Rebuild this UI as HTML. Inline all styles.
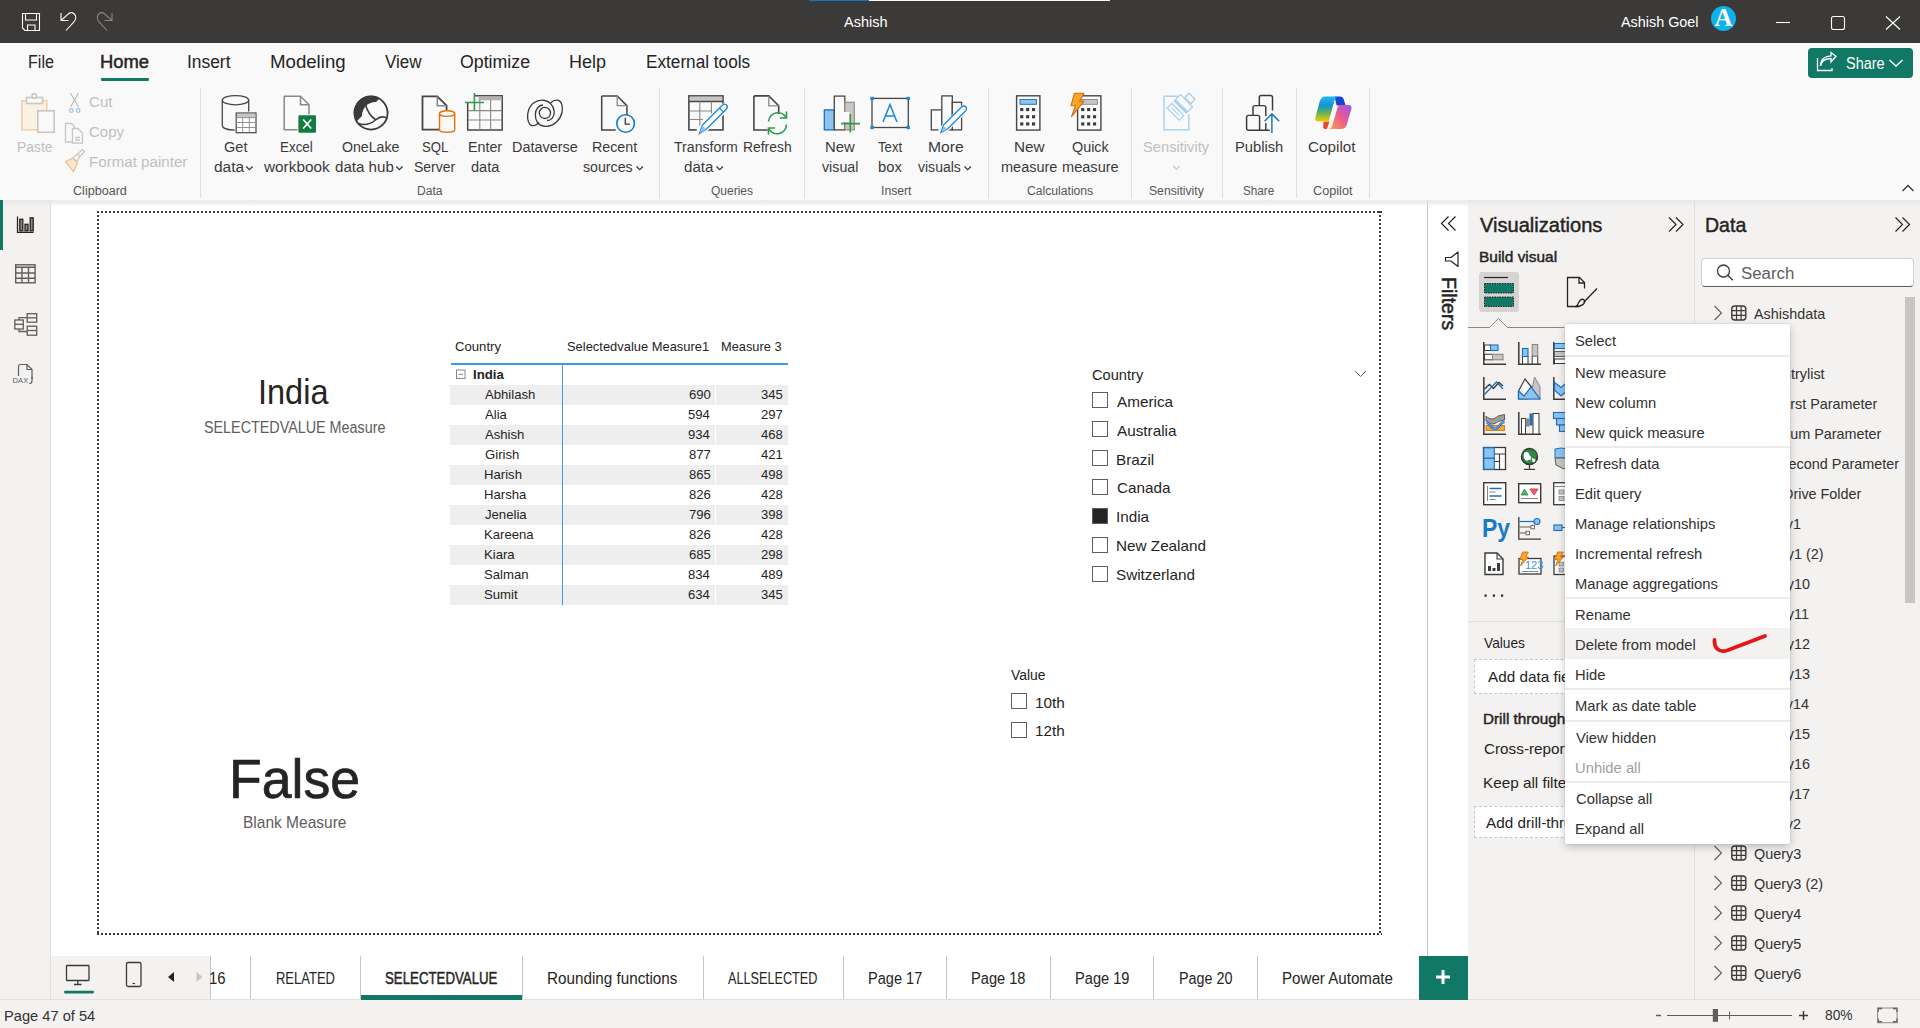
<!DOCTYPE html>
<html><head><meta charset="utf-8">
<style>
*{box-sizing:border-box}
html,body{margin:0;padding:0;width:1920px;height:1028px;overflow:hidden;background:#fff;font-family:"Liberation Sans",sans-serif;color:#252423}
.a{position:absolute}
.t{position:absolute;white-space:nowrap;line-height:1;transform-origin:0 0}
svg{position:absolute;overflow:visible}
</style></head><body>
<div class="a" style="left:0px;top:0px;width:1920px;height:43px;background:#3b3a39"></div>
<div class="a" style="left:809px;top:0px;width:60px;height:1px;background:#0078d4"></div>
<div class="a" style="left:869px;top:0px;width:241px;height:1px;background:#f8f8f8"></div>
<div class="a" style="left:0px;top:43px;width:1920px;height:157px;background:#f9f9f9"></div>
<div class="a" style="left:0px;top:200px;width:1920px;height:828px;background:#f3f2f1"></div>
<div class="a" style="left:51px;top:200px;width:1376px;height:756px;background:#fff"></div>
<div class="a" style="left:50px;top:200px;width:1px;height:800px;background:#e1dfdd"></div>
<div class="a" style="left:0px;top:200px;width:3px;height:50px;background:#117865"></div>
<div class="a" style="left:1427px;top:200px;width:1px;height:756px;background:#c8c6c4"></div>
<div class="a" style="left:1428px;top:200px;width:40px;height:756px;background:#fff"></div>
<div class="a" style="left:1694px;top:200px;width:1px;height:800px;background:#e1dfdd"></div>
<div class="a" style="left:0px;top:999px;width:1920px;height:1px;background:#e1dfdd"></div>
<div class="a" style="left:3px;top:200px;width:1917px;height:6px;background:linear-gradient(#e6e6e6,rgba(243,242,241,0))"></div>
<div class="a" style="left:51px;top:200px;width:1376px;height:6px;background:linear-gradient(#ececec,rgba(255,255,255,0))"></div>
<div class="a" style="left:1428px;top:200px;width:40px;height:6px;background:linear-gradient(#ececec,rgba(255,255,255,0))"></div>
<div class="t" style="left:844.40px;top:13.83px;font-size:15.5px;font-weight:400;color:#fff;transform:scaleX(0.9370);">Ashish</div>
<div class="t" style="left:1621.00px;top:13.53px;font-size:15.5px;font-weight:400;color:#fff;transform:scaleX(0.9277);">Ashish Goel</div>
<div class="t" style="left:27.86px;top:53.45px;font-size:18px;font-weight:400;color:#252423;transform:scaleX(0.8929);">File</div>
<div class="t" style="left:187.03px;top:53.45px;font-size:18px;font-weight:400;color:#252423;transform:scaleX(0.9659);">Insert</div>
<div class="t" style="left:269.96px;top:53.45px;font-size:18px;font-weight:400;color:#252423;transform:scaleX(1.0352);">Modeling</div>
<div class="t" style="left:384.60px;top:53.45px;font-size:18px;font-weight:400;color:#252423;transform:scaleX(0.9462);">View</div>
<div class="t" style="left:460.01px;top:53.45px;font-size:18px;font-weight:400;color:#252423;transform:scaleX(0.9857);">Optimize</div>
<div class="t" style="left:569.00px;top:53.45px;font-size:18px;font-weight:400;color:#252423;">Help</div>
<div class="t" style="left:645.55px;top:53.45px;font-size:18px;font-weight:400;color:#252423;transform:scaleX(0.9546);">External tools</div>
<div class="t" style="left:99.98px;top:53.45px;font-size:18px;font-weight:400;-webkit-text-stroke:0.45px #252423;color:#252423;transform:scaleX(1.0213);">Home</div>
<div class="a" style="left:101px;top:78px;width:48px;height:3px;background:#117865;border-radius:1px"></div>
<div class="a" style="left:1808px;top:48px;width:105px;height:30px;background:#117865;border-radius:4px"></div>
<div class="t" style="left:1846.10px;top:55.70px;font-size:16px;font-weight:400;color:#fff;transform:scaleX(0.9024);">Share</div>
<div class="t" style="left:17.11px;top:138.72px;font-size:15.5px;font-weight:400;color:#c1bfbd;transform:scaleX(0.8947);">Paste</div>
<div class="t" style="left:89.03px;top:94.42px;font-size:15.5px;font-weight:400;color:#c1bfbd;transform:scaleX(0.9739);">Cut</div>
<div class="t" style="left:89.03px;top:124.42px;font-size:15.5px;font-weight:400;color:#c1bfbd;transform:scaleX(0.9657);">Copy</div>
<div class="t" style="left:89.02px;top:154.32px;font-size:15.5px;font-weight:400;color:#c1bfbd;transform:scaleX(0.9760);">Format painter</div>
<div class="t" style="left:223.56px;top:138.72px;font-size:15.5px;font-weight:400;color:#3b3a39;transform:scaleX(0.9375);">Get</div>
<div class="t" style="left:214.00px;top:158.62px;font-size:15.5px;font-weight:400;color:#3b3a39;">data</div>
<div class="t" style="left:279.88px;top:138.72px;font-size:15.5px;font-weight:400;color:#3b3a39;transform:scaleX(0.8653);">Excel</div>
<div class="t" style="left:263.50px;top:158.62px;font-size:15.5px;font-weight:400;color:#3b3a39;transform:scaleX(0.9894);">workbook</div>
<div class="t" style="left:342.00px;top:138.72px;font-size:15.5px;font-weight:400;color:#3b3a39;transform:scaleX(0.9127);">OneLake</div>
<div class="t" style="left:334.50px;top:158.62px;font-size:15.5px;font-weight:400;color:#3b3a39;transform:scaleX(0.9750);">data hub</div>
<div class="t" style="left:421.65px;top:138.72px;font-size:15.5px;font-weight:400;color:#3b3a39;transform:scaleX(0.8500);">SQL</div>
<div class="t" style="left:414.10px;top:158.62px;font-size:15.5px;font-weight:400;color:#3b3a39;transform:scaleX(0.9000);">Server</div>
<div class="t" style="left:467.83px;top:138.72px;font-size:15.5px;font-weight:400;color:#3b3a39;transform:scaleX(0.9208);">Enter</div>
<div class="t" style="left:470.60px;top:158.62px;font-size:15.5px;font-weight:400;color:#3b3a39;transform:scaleX(0.9383);">data</div>
<div class="t" style="left:512.07px;top:138.72px;font-size:15.5px;font-weight:400;color:#3b3a39;transform:scaleX(0.9312);">Dataverse</div>
<div class="t" style="left:591.83px;top:138.72px;font-size:15.5px;font-weight:400;color:#3b3a39;transform:scaleX(0.9198);">Recent</div>
<div class="t" style="left:582.50px;top:158.62px;font-size:15.5px;font-weight:400;color:#3b3a39;transform:scaleX(0.9148);">sources</div>
<div class="t" style="left:673.75px;top:138.72px;font-size:15.5px;font-weight:400;color:#3b3a39;transform:scaleX(0.9107);">Transform</div>
<div class="t" style="left:683.75px;top:158.62px;font-size:15.5px;font-weight:400;color:#3b3a39;transform:scaleX(0.9750);">data</div>
<div class="t" style="left:742.85px;top:138.72px;font-size:15.5px;font-weight:400;color:#3b3a39;transform:scaleX(0.8962);">Refresh</div>
<div class="t" style="left:825.04px;top:138.72px;font-size:15.5px;font-weight:400;color:#3b3a39;transform:scaleX(0.9600);">New</div>
<div class="t" style="left:822.40px;top:158.62px;font-size:15.5px;font-weight:400;color:#3b3a39;transform:scaleX(0.9179);">visual</div>
<div class="t" style="left:878.30px;top:138.72px;font-size:15.5px;font-weight:400;color:#3b3a39;transform:scaleX(0.8483);">Text</div>
<div class="t" style="left:877.95px;top:158.62px;font-size:15.5px;font-weight:400;color:#3b3a39;transform:scaleX(0.9542);">box</div>
<div class="t" style="left:928.49px;top:138.72px;font-size:15.5px;font-weight:400;color:#3b3a39;transform:scaleX(1.0118);">More</div>
<div class="t" style="left:918.00px;top:158.62px;font-size:15.5px;font-weight:400;color:#3b3a39;transform:scaleX(0.9043);">visuals</div>
<div class="t" style="left:1013.81px;top:138.72px;font-size:15.5px;font-weight:400;color:#3b3a39;transform:scaleX(0.9867);">New</div>
<div class="t" style="left:1000.86px;top:158.62px;font-size:15.5px;font-weight:400;color:#3b3a39;transform:scaleX(0.9356);">measure</div>
<div class="t" style="left:1071.70px;top:138.72px;font-size:15.5px;font-weight:400;color:#3b3a39;transform:scaleX(0.9275);">Quick</div>
<div class="t" style="left:1061.56px;top:158.62px;font-size:15.5px;font-weight:400;color:#3b3a39;transform:scaleX(0.9407);">measure</div>
<div class="t" style="left:1235.45px;top:138.72px;font-size:15.5px;font-weight:400;color:#3b3a39;transform:scaleX(0.9490);">Publish</div>
<div class="t" style="left:1308.31px;top:138.72px;font-size:15.5px;font-weight:400;color:#3b3a39;transform:scaleX(0.9854);">Copilot</div>
<div class="t" style="left:1143.45px;top:138.72px;font-size:15.5px;font-weight:400;color:#c1bfbd;transform:scaleX(0.9478);">Sensitivity</div>
<div class="t" style="left:73.40px;top:185.14px;font-size:12.3px;font-weight:400;color:#575655;transform:scaleX(1.0231);">Clipboard</div>
<div class="t" style="left:417.02px;top:185.14px;font-size:12.3px;font-weight:400;color:#575655;transform:scaleX(0.9800);">Data</div>
<div class="t" style="left:711.25px;top:185.14px;font-size:12.3px;font-weight:400;color:#575655;transform:scaleX(0.9767);">Queries</div>
<div class="t" style="left:880.91px;top:185.14px;font-size:12.3px;font-weight:400;color:#575655;transform:scaleX(0.9900);">Insert</div>
<div class="t" style="left:1027.00px;top:185.14px;font-size:12.3px;font-weight:400;color:#575655;transform:scaleX(0.9881);">Calculations</div>
<div class="t" style="left:1148.91px;top:185.14px;font-size:12.3px;font-weight:400;color:#575655;transform:scaleX(0.9891);">Sensitivity</div>
<div class="t" style="left:1243.35px;top:185.14px;font-size:12.3px;font-weight:400;color:#575655;transform:scaleX(0.9531);">Share</div>
<div class="t" style="left:1313.40px;top:185.14px;font-size:12.3px;font-weight:400;color:#575655;transform:scaleX(1.0316);">Copilot</div>
<div class="a" style="left:200px;top:88px;width:1px;height:110px;background:#e1dfdd"></div>
<div class="a" style="left:659px;top:88px;width:1px;height:110px;background:#e1dfdd"></div>
<div class="a" style="left:804px;top:88px;width:1px;height:110px;background:#e1dfdd"></div>
<div class="a" style="left:988px;top:88px;width:1px;height:110px;background:#e1dfdd"></div>
<div class="a" style="left:1131px;top:88px;width:1px;height:110px;background:#e1dfdd"></div>
<div class="a" style="left:1222px;top:88px;width:1px;height:110px;background:#e1dfdd"></div>
<div class="a" style="left:1296px;top:88px;width:1px;height:110px;background:#e1dfdd"></div>
<div class="a" style="left:1369px;top:88px;width:1px;height:110px;background:#e1dfdd"></div>
<svg style="left:0;top:0" width="1920" height="1028" viewBox="0 0 1920 1028">
<g fill="none" stroke="#fff" stroke-width="1.1">
<path d="M22.5 13.5h17v17h-14.5l-2.5-2.5z"/>
<path d="M25.5 13.5v6.5h11v-6.5"/>
<path d="M27.5 30.5v-5.5h7.5v5.5"/>
<path d="M61 13v7.5h7.5"/>
<path d="M61.5 20L68.5 13.8C72 11 76.5 14 75.5 19C75.2 20.5 74.5 21.3 73.5 22.3L66 30.5"/>
</g>
<g fill="none" stroke="#8a8886" stroke-width="1.1">
<path d="M112 13v7.5h-7.5"/>
<path d="M111.5 20L104.5 13.8C101 11 96.5 14 97.5 19C97.8 20.5 98.5 21.3 99.5 22.3L107 30.5"/>
</g>
<circle cx="1723.5" cy="18.5" r="12.5" fill="#0db1ed"/>
<g fill="none" stroke="#fff" stroke-width="1.1">
<path d="M1776 22.5h14"/>
<rect x="1831.5" y="16.5" width="13" height="13" rx="2"/>
<path d="M1886 16.5l14 13M1900 16.5l-14 13"/>
</g>
</svg>
<div class="t" style="left:1713px;top:5px;font-family:'Liberation Serif';font-weight:700;font-size:25px;color:#fff;width:21px;text-align:center">A</div>
<svg style="left:0;top:0" width="1920" height="1028" viewBox="0 0 1920 1028"><g fill="none" stroke="#fff" stroke-width="1.3">
<path d="M1817.5 58v12.5h14.5v-2.5"/>
<path d="M1820.5 66C1821.5 60.5 1825.5 58.5 1831 58.5V62L1836 56.3L1831 52.5V55.8C1825 56 1820.5 59.5 1820.5 66z"/>
<path d="M1889.5 60l6.5 6l6.5-6"/>
</g></svg>
<svg style="left:0;top:0" width="1920" height="1028" viewBox="0 0 1920 1028">
<!-- paste (disabled) -->
<g fill="none" stroke-width="1.6">
<rect x="21.8" y="100.8" width="25" height="29" fill="#fbf1e3" stroke="#f2d2a8"/>
<rect x="26.5" y="97.5" width="16" height="6" fill="#f9f9f9" stroke="#c8c6c4"/>
<circle cx="34.3" cy="96" r="2.3" fill="#f9f9f9" stroke="#c8c6c4"/>
<rect x="37.8" y="110.8" width="16.4" height="21.5" fill="#f9f9f9" stroke="#c8c6c4"/>
</g>
<!-- cut -->
<g fill="none" stroke="#b8b6b4" stroke-width="1.1"><path d="M70.5 93l8 14M78.5 93l-8 14"/></g>
<g fill="none" stroke="#9cc3e5" stroke-width="1.2"><circle cx="71.3" cy="110.5" r="1.8"/><circle cx="78.2" cy="110.5" r="1.8"/></g>
<!-- copy -->
<g fill="#f9f9f9" stroke="#c8c6c4" stroke-width="1.3">
<path d="M65.5 123.5h6l3 3v15.5h-9z"/>
<path d="M72.5 128.5h5.5l4.5 4.5v10h-10z"/>
<path d="M75 137.5h5M75 140h5"/>
</g>
<!-- format painter -->
<g stroke-width="1.2">
<path d="M65.5 161.5l7.5-3.5l4.5 5l-4 8.5z" fill="#fbe7d2" stroke="#f0b887"/>
<path d="M72.5 158l5 -4l2.5 2.5l-3 4.5z" fill="#f9f9f9" stroke="#c8c6c4"/>
<path d="M77.5 154l5-4.5l2 2l-4.5 5z" fill="#f9f9f9" stroke="#c8c6c4"/>
</g>
<!-- get data -->
<g fill="none" stroke="#484644" stroke-width="1.3">
<ellipse cx="235.5" cy="100.2" rx="13.2" ry="4.6" fill="#fafafa"/>
<path d="M222.3 100.2v25.3c0 2.5 5 4.5 12.5 4.7"/>
<path d="M248.7 100.2v11.2"/>
</g>
<rect x="236.2" y="113" width="19.8" height="19.7" fill="#fff" stroke="#484644" stroke-width="1.2"/>
<rect x="237" y="113.8" width="18.2" height="3.6" fill="#c8c6c4"/>
<g stroke="#8a8886" stroke-width="0.9"><path d="M236.5 117.6h19M236.5 122.5h19M236.5 127.5h19M242.7 117.6v15M249.3 117.6v15"/></g>
<!-- excel -->
<path d="M284.2 96.2h16.3l8.5 8.5v25h-24.8z" fill="#fafafa" stroke="#8a8886" stroke-width="1.5" stroke-linejoin="round"/>
<path d="M300.5 96.2v8.5h8.5" fill="none" stroke="#8a8886" stroke-width="1.5"/>
<rect x="297.6" y="114.4" width="19.2" height="19.1" rx="1.5" fill="#fafafa"/>
<rect x="298.4" y="115.2" width="17.6" height="17.5" rx="1.2" fill="#107c41"/>
<path d="M303.2 119.5l8 9M311.2 119.5l-8 9" stroke="#fff" stroke-width="1.7"/>
<!-- onelake -->
<defs><clipPath id="olc"><path d="M345 133L345 85L393 85z"/></clipPath></defs>
<circle cx="371" cy="113" r="17.2" fill="#3b3a39" clip-path="url(#olc)"/><circle cx="375.6" cy="115.6" r="13.6" fill="#fafafa"/>
<circle cx="371" cy="113" r="16.6" fill="none" stroke="#3b3a39" stroke-width="1.8"/>
<path d="M365.3 103.5C367 111 370.5 116.5 376 120M358.3 123.5C364 125.5 370 124.5 375.5 120C379 117 383 115.5 387.3 118.5" fill="none" stroke="#3b3a39" stroke-width="1.5"/>
<!-- sql server -->
<path d="M422.5 96.4h14.8l9.3 9.3v24h-24.1z" fill="#fafafa" stroke="#484644" stroke-width="1.8"/>
<path d="M437.3 96.4v9.3h9.3" fill="none" stroke="#8a8886" stroke-width="1.6"/>
<path d="M439.5 113.5v16.2c0 1.5 3.5 2.5 7.6 2.5s7.6-1 7.6-2.5v-16.2" fill="#fafafa" stroke="#e8710a" stroke-width="1.4"/>
<ellipse cx="447.1" cy="113.6" rx="7.6" ry="2.8" fill="#fafafa" stroke="#e8710a" stroke-width="1.4"/>
<!-- enter data -->
<rect x="467.7" y="95.8" width="34.5" height="34.2" fill="#fafafa" stroke="#484644" stroke-width="1.5"/>
<rect x="478.5" y="96.5" width="23" height="3.8" fill="#b4b2b0"/>
<g stroke="#8a8886" stroke-width="1.1"><path d="M468 110.6h34M468 120h34M479.8 100v30M490.6 100v30"/></g>
<rect x="464" y="92" width="10" height="10" fill="#fafafa"/>
<path d="M474.4 93v18M465 102.5h19" stroke="#339a47" stroke-width="1.6"/>
<!-- dataverse -->
<g fill="none" stroke="#3b3a39" stroke-width="1.3">
<path d="M538.8 122.5C536 126 532 126.5 530 124.5C527.5 122 527 116 528.2 111.5C530 104 536 100 542.5 100.2C549 100.5 553.5 105 554.2 111.5C554.8 117 551 120.5 547 120.5"/>
<path d="M550.8 102.8C553 100.5 556 99.8 558.5 100.3C562 101.5 563 107 562 112.5C560.5 119.5 554 126 546.5 126.3C542 126.5 539 124.5 537.5 122.5C534.5 118.5 534.8 111 537.5 108C539.5 105.5 541.5 105 543 105"/>
<circle cx="544.9" cy="112.9" r="5.6"/>
</g>
<!-- recent sources -->
<path d="M601.7 95.9h15.5l9.7 9.7v10" fill="none" stroke="#484644" stroke-width="1.5"/>
<path d="M601.7 95.9v34.1h14" fill="none" stroke="#484644" stroke-width="1.5"/>
<path d="M617.2 95.9v9.7h9.7" fill="none" stroke="#8a8886" stroke-width="1.3"/>
<circle cx="625.6" cy="123.5" r="8.8" fill="#fafafa" stroke="#0f7bd0" stroke-width="1.6"/>
<path d="M625.3 117.8v6.3h4.6" fill="none" stroke="#3b3a39" stroke-width="1.3"/>
<!-- transform data -->
<rect x="688.9" y="95.9" width="34.1" height="34" fill="#fafafa" stroke="#484644" stroke-width="1.6"/>
<rect x="689.7" y="96.7" width="32.5" height="4.5" fill="#c8c6c4"/>
<path d="M689 101.5h34" stroke="#484644" stroke-width="1.3"/>
<g stroke="#8a8886" stroke-width="1.1"><path d="M689 111h23M689 119.5h14M699.8 101.5v28M711.4 101.5v12"/></g>
<path d="M701 131L724 108" stroke="#fafafa" stroke-width="9" stroke-linecap="round"/>
<path d="M699.5 133.5L702.5 125L722 105.5C723.5 104 725.5 104 726.5 105C727.5 106 727.5 108 726 109.5L706.5 129z" fill="#fafafa" stroke="#1a86d9" stroke-width="1.3"/>
<path d="M700 133L702.3 126.3C703.8 126.5 705.5 128 705.8 129.5z" fill="#8fc3ee"/>
<path d="M719.5 108l4 4" stroke="#1a86d9" stroke-width="1.1"/>
<!-- refresh -->
<path d="M753.9 95.9h14.9l9.9 9.9v8.2" fill="none" stroke="#484644" stroke-width="1.6"/>
<path d="M753.9 95.9v34.1h13.8" fill="none" stroke="#484644" stroke-width="1.6"/>
<path d="M768.8 95.9v9.9h9.9" fill="none" stroke="#8a8886" stroke-width="1.3"/>
<g fill="none" stroke="#2a9a47" stroke-width="1.6">
<path d="M768.6 121.5A9.3 9.3 0 0 1 786 117.5"/>
<path d="M786.4 124.5A9.3 9.3 0 0 1 769 129"/>
<path d="M786.5 111.5v6.5h-6.5M768.5 134.5v-6.5h6.5"/>
</g>
<!-- new visual -->
<rect x="824.3" y="109.9" width="10" height="20" fill="#8cc4f0" stroke="#1a6dc4" stroke-width="1.3"/>
<rect x="834.3" y="96.1" width="10.5" height="33.8" fill="#fafafa" stroke="#484644" stroke-width="1.3"/>
<rect x="844.8" y="102.3" width="9.5" height="27.6" fill="#c8c6c4" stroke="#8a8886" stroke-width="1.1"/>
<rect x="839.5" y="112" width="10" height="10" fill="#fafafa"/>
<path d="M850.3 114v18.5M841 123.6h19" stroke="#339a47" stroke-width="1.6"/>
<!-- text box -->
<rect x="872" y="98.4" width="36.3" height="29.1" fill="none" stroke="#484644" stroke-width="1.3"/>
<g fill="#1a86d9"><rect x="870.4" y="96.8" width="3.4" height="3.4"/><rect x="906.5" y="96.8" width="3.4" height="3.4"/><rect x="870.4" y="125.8" width="3.4" height="3.4"/><rect x="906.5" y="125.8" width="3.4" height="3.4"/></g>
<path d="M883 122L890 104.5L897 122M885.5 116h9" fill="none" stroke="#1a86d9" stroke-width="1.5"/>
<!-- more visuals -->
<g fill="#fafafa" stroke="#484644" stroke-width="1.3">
<rect x="931.3" y="109.9" width="10.5" height="20"/>
<rect x="941.8" y="95.9" width="10.5" height="34"/>
<rect x="952.3" y="102.3" width="9.3" height="27.6"/>
</g>
<path d="M942.5 130.5L964 109" stroke="#fafafa" stroke-width="8.5" stroke-linecap="round"/>
<path d="M941 132.5L943.5 125L961.5 107C962.8 105.7 964.8 105.7 965.8 106.7C966.8 107.7 966.8 109.7 965.5 111L947.5 129z" fill="#fafafa" stroke="#1a86d9" stroke-width="1.3"/>
<path d="M941.5 132L943.5 126.5C945 126.8 946.5 128 946.8 129.5z" fill="#8fc3ee"/>
<!-- new measure -->
<rect x="1016.6" y="95.8" width="23.3" height="34.3" fill="#fafafa" stroke="#484644" stroke-width="1.4"/>
<rect x="1020" y="99.5" width="16.5" height="4.8" fill="#8cc4f0" stroke="#1a6dc4" stroke-width="0.9"/>
<g fill="#3b3a39"><rect x="1020.2" y="108.0" width="3.1" height="3.1"/><rect x="1020.2" y="115.2" width="3.1" height="3.1"/><rect x="1020.2" y="122.4" width="3.1" height="3.1"/><rect x="1026.1000000000001" y="108.0" width="3.1" height="3.1"/><rect x="1026.1000000000001" y="115.2" width="3.1" height="3.1"/><rect x="1026.1000000000001" y="122.4" width="3.1" height="3.1"/><rect x="1032.0" y="108.0" width="3.1" height="3.1"/><rect x="1032.0" y="115.2" width="3.1" height="3.1"/><rect x="1032.0" y="122.4" width="3.1" height="3.1"/></g>
<!-- quick measure -->
<rect x="1077.6" y="95.8" width="23.3" height="34.3" fill="#fafafa" stroke="#484644" stroke-width="1.4"/>
<rect x="1081" y="99.5" width="16.5" height="4.8" fill="#c8c6c4" stroke="#8a8886" stroke-width="0.9"/>
<g fill="#3b3a39"><rect x="1081.2" y="108.0" width="3.1" height="3.1"/><rect x="1081.2" y="115.2" width="3.1" height="3.1"/><rect x="1081.2" y="122.4" width="3.1" height="3.1"/><rect x="1087.1000000000001" y="108.0" width="3.1" height="3.1"/><rect x="1087.1000000000001" y="115.2" width="3.1" height="3.1"/><rect x="1087.1000000000001" y="122.4" width="3.1" height="3.1"/><rect x="1093.0" y="108.0" width="3.1" height="3.1"/><rect x="1093.0" y="115.2" width="3.1" height="3.1"/><rect x="1093.0" y="122.4" width="3.1" height="3.1"/></g>
<path d="M1074.5 93.2h9.5l-4.5 8h4.5l-12.5 15.5l4-11h-4.5z" fill="#f7a823" stroke="#d9680f" stroke-width="1.1" stroke-linejoin="round"/>
<!-- sensitivity -->
<path d="M1178.2 96.2H1164v33.6h24.8v-15.5" fill="none" stroke="#a9d2f0" stroke-width="1.5"/>
<g transform="rotate(45 1182 106)">
<rect x="1173" y="111.5" width="17" height="6.5" fill="#f9f9f9" stroke="#a9d2f0" stroke-width="1.3"/>
<path d="M1176 114.7h11" stroke="#a9d2f0" stroke-width="1.1"/>
<rect x="1173" y="99" width="17" height="9" fill="#f9f9f9" stroke="#a9d2f0" stroke-width="1.3"/>
<rect x="1173" y="105.5" width="17" height="2.5" fill="#a9d2f0"/>
<rect x="1178" y="92" width="8.5" height="6" fill="#f9f9f9" stroke="#a9d2f0" stroke-width="1.3"/>
</g>
<!-- publish -->
<g fill="none" stroke="#3b3a39" stroke-width="1.45" stroke-linejoin="round">
<path d="M1265.8 130.2h-17.2c-1.2 0-2-0.8-2-2v-10.8c0-1.2 0.8-2 2-2h9c1.2 0 2 0.8 2 2v12.8"/>
<path d="M1253 115.4v-7.8c0-1.2 0.8-2 2-2h8.8c1.2 0 2 0.8 2 2v8.4M1265.8 123v7.2h4"/>
<path d="M1259.3 105.6v-8.2c0-1.2 0.8-2 2-2h9.2c1.2 0 2 0.8 2 2v13.2"/>
</g>
<path d="M1271.9 133v-19M1264.6 121.2l7.3-7.3l7.3 7.3" fill="none" stroke="#1a7ab8" stroke-width="1.5"/>
</svg>
<svg style="left:0;top:0" width="1920" height="1028" viewBox="0 0 1920 1028">
<defs>
<linearGradient id="cpA" x1="0" y1="0" x2="0" y2="1"><stop offset="0" stop-color="#22b7f7"/><stop offset="0.35" stop-color="#1592d8"/><stop offset="0.6" stop-color="#53ae66"/><stop offset="1" stop-color="#f1cc06"/></linearGradient>
<linearGradient id="cpB" x1="1" y1="0" x2="0" y2="1"><stop offset="0" stop-color="#9b55f0"/><stop offset="0.5" stop-color="#ef5a8c"/><stop offset="1" stop-color="#fba54a"/></linearGradient>
</defs>
<path d="M1334.5 96.5h5.5c2 0 3.3 1.2 3.8 3l1.8 6h-9z" fill="#1846d1"/>
<path d="M1323.5 121.5h6l-2.5 7.3c-1.5 0.5-3 0.3-3.8-1z" fill="#e8492f"/>
<path d="M1325 96.5h13.5c-2.2 0.5-3.5 2-4.2 4.5l-5.5 20.5h-10.8c-2 0-3.2-1.5-2.8-3.5l4.5-16.5c0.8-3 2.8-5 5.3-5z" fill="url(#cpA)"/>
<path d="M1340.5 105h8c2 0 3.4 1.6 3 3.6l-4.7 15.9c-0.9 3-3 4.6-5.5 4.6h-12.8c2.2-0.5 3.4-2 4.1-4.5l5.1-17.6c0.5-1.3 1.5-2 2.8-2z" fill="url(#cpB)"/>
</svg>
<svg style="left:0;top:0" width="1920" height="1028" viewBox="0 0 1920 1028"><path d="M246.2 166.5l3.2 3.2l3.2-3.2" fill="none" stroke="#3b3a39" stroke-width="1.3"/><path d="M396.2 166.5l3.2 3.2l3.2-3.2" fill="none" stroke="#3b3a39" stroke-width="1.3"/><path d="M636.5 166.5l3.2 3.2l3.2-3.2" fill="none" stroke="#3b3a39" stroke-width="1.3"/><path d="M716.5 166.5l3.2 3.2l3.2-3.2" fill="none" stroke="#3b3a39" stroke-width="1.3"/><path d="M964.5 166.5l3.2 3.2l3.2-3.2" fill="none" stroke="#3b3a39" stroke-width="1.3"/><path d="M1173.3 166l3.2 3.2l3.2-3.2" fill="none" stroke="#c8c6c4" stroke-width="1.2"/><path d="M1902.5 191l5.5-5.5l5.5 5.5" fill="none" stroke="#3b3a39" stroke-width="1.4"/></svg>
<svg style="left:0;top:0" width="1920" height="1028" viewBox="0 0 1920 1028">
<g fill="none" stroke="#252423" stroke-width="1.3">
<path d="M17.5 216.5v15.8h16"/>
<rect x="19.8" y="219.3" width="3" height="11.5" fill="#8a8886"/><rect x="25" y="224.3" width="3" height="6.5" fill="#8a8886"/><rect x="30.2" y="217.8" width="3" height="13" fill="#8a8886"/>
</g>
<g fill="none" stroke="#605e5c" stroke-width="1.4">
<rect x="15.7" y="264.8" width="19.4" height="18"/>
<path d="M15.7 267.3h19.4M15.7 273h19.4M15.7 278.3h19.4M22 267.3v15.5M28.5 267.3v15.5"/>
</g>
<g fill="none" stroke="#605e5c" stroke-width="1.3">
<rect x="14.8" y="320" width="8.5" height="9" /><path d="M14.8 324.3h8.5"/>
<rect x="27.2" y="313.7" width="9.5" height="8.5"/><path d="M27.2 317.8h9.5"/>
<rect x="27.2" y="326.2" width="9.5" height="9"/><path d="M27.2 330.5h9.5"/>
<path d="M19 320v-2.3h8.2M19 329v2.5h8.2"/>
</g>
<g fill="none" stroke="#605e5c" stroke-width="1.2">
<path d="M18.5 376v-9.5c0-1.2 0.8-2 2-2h6.5l5 5v9.5"/>
<path d="M27 364.5v5h5"/>
<path d="M32 376.5v4.5c0 1.5-1.3 2.5-2.7 2.5"/>
</g>
</svg>
<div class="t" style="left:12.6px;top:376.8px;font-size:7.6px;color:#605e5c;letter-spacing:0px">DAX</div>
<svg style="left:0;top:0" width="1920" height="1028" viewBox="0 0 1920 1028"><g stroke="#3b3a39" stroke-width="2" stroke-dasharray="2 2"><path d="M97 212H1382"/><path d="M97 934H1382"/><path d="M98 211V935"/><path d="M1380 211V935"/></g></svg>
<div class="t" style="left:257.66px;top:374.95px;font-size:34.3px;font-weight:400;color:#252423;transform:scaleX(0.9472);">India</div>
<div class="t" style="left:203.80px;top:420.20px;font-size:16px;font-weight:400;color:#605e5c;transform:scaleX(0.8960);">SELECTEDVALUE Measure</div>
<div class="t" style="left:228.87px;top:751.00px;font-size:56px;font-weight:400;color:#252423;transform:scaleX(0.9580);-webkit-text-stroke:0.7px #252423;">False</div>
<div class="t" style="left:243.39px;top:814.05px;font-size:17px;font-weight:400;color:#605e5c;transform:scaleX(0.9125);">Blank Measure</div>
<div class="a" style="left:450px;top:385px;width:338px;height:20px;background:#eeeeee"></div>
<div class="a" style="left:715px;top:385px;width:1px;height:20px;background:#fff"></div>
<div class="a" style="left:450px;top:425px;width:338px;height:20px;background:#eeeeee"></div>
<div class="a" style="left:715px;top:425px;width:1px;height:20px;background:#fff"></div>
<div class="a" style="left:450px;top:465px;width:338px;height:20px;background:#eeeeee"></div>
<div class="a" style="left:715px;top:465px;width:1px;height:20px;background:#fff"></div>
<div class="a" style="left:450px;top:505px;width:338px;height:20px;background:#eeeeee"></div>
<div class="a" style="left:715px;top:505px;width:1px;height:20px;background:#fff"></div>
<div class="a" style="left:450px;top:545px;width:338px;height:20px;background:#eeeeee"></div>
<div class="a" style="left:715px;top:545px;width:1px;height:20px;background:#fff"></div>
<div class="a" style="left:450px;top:585px;width:338px;height:20px;background:#eeeeee"></div>
<div class="a" style="left:715px;top:585px;width:1px;height:20px;background:#fff"></div>
<div class="a" style="left:451px;top:363px;width:337px;height:2px;background:#3b9ae1"></div>
<div class="a" style="left:562px;top:364px;width:1px;height:241px;background:#3b9ae1"></div>
<div class="t" style="left:455.20px;top:340.02px;font-size:13.5px;font-weight:400;color:#252423;transform:scaleX(0.9725);">Country</div>
<div class="t" style="left:567.44px;top:340.02px;font-size:13.5px;font-weight:400;color:#252423;transform:scaleX(0.9565);">Selectedvalue Measure1</div>
<div class="t" style="left:720.55px;top:340.02px;font-size:13.5px;font-weight:400;color:#252423;transform:scaleX(0.9492);">Measure 3</div>
<svg style="left:0;top:0" width="1920" height="1028" viewBox="0 0 1920 1028"><rect x="456.5" y="370" width="8.5" height="8.5" fill="none" stroke="#8a8886" stroke-width="1"/><path d="M458.5 374.3h4.5" stroke="#8a8886" stroke-width="1"/></svg>
<div class="t" style="left:473.42px;top:368.32px;font-size:13.5px;font-weight:700;color:#252423;transform:scaleX(0.9806);">India</div>
<div class="t" style="left:484.60px;top:387.82px;font-size:13.5px;font-weight:400;color:#252423;transform:scaleX(0.9725);">Abhilash</div>
<div class="t" style="left:689.30px;top:387.82px;font-size:13.5px;font-weight:400;color:#252423;transform:scaleX(0.9725);">690</div>
<div class="t" style="left:761.40px;top:387.82px;font-size:13.5px;font-weight:400;color:#252423;transform:scaleX(0.9725);">345</div>
<div class="t" style="left:484.60px;top:407.82px;font-size:13.5px;font-weight:400;color:#252423;transform:scaleX(0.9725);">Alia</div>
<div class="t" style="left:688.33px;top:407.82px;font-size:13.5px;font-weight:400;color:#252423;transform:scaleX(0.9725);">594</div>
<div class="t" style="left:761.40px;top:407.82px;font-size:13.5px;font-weight:400;color:#252423;transform:scaleX(0.9725);">297</div>
<div class="t" style="left:484.60px;top:427.82px;font-size:13.5px;font-weight:400;color:#252423;transform:scaleX(0.9725);">Ashish</div>
<div class="t" style="left:688.33px;top:427.82px;font-size:13.5px;font-weight:400;color:#252423;transform:scaleX(0.9725);">934</div>
<div class="t" style="left:761.40px;top:427.82px;font-size:13.5px;font-weight:400;color:#252423;transform:scaleX(0.9725);">468</div>
<div class="t" style="left:484.60px;top:447.82px;font-size:13.5px;font-weight:400;color:#252423;transform:scaleX(0.9725);">Girish</div>
<div class="t" style="left:689.30px;top:447.82px;font-size:13.5px;font-weight:400;color:#252423;transform:scaleX(0.9725);">877</div>
<div class="t" style="left:761.40px;top:447.82px;font-size:13.5px;font-weight:400;color:#252423;transform:scaleX(0.9725);">421</div>
<div class="t" style="left:483.63px;top:467.82px;font-size:13.5px;font-weight:400;color:#252423;transform:scaleX(0.9725);">Harish</div>
<div class="t" style="left:689.30px;top:467.82px;font-size:13.5px;font-weight:400;color:#252423;transform:scaleX(0.9725);">865</div>
<div class="t" style="left:761.40px;top:467.82px;font-size:13.5px;font-weight:400;color:#252423;transform:scaleX(0.9725);">498</div>
<div class="t" style="left:483.63px;top:487.82px;font-size:13.5px;font-weight:400;color:#252423;transform:scaleX(0.9725);">Harsha</div>
<div class="t" style="left:689.30px;top:487.82px;font-size:13.5px;font-weight:400;color:#252423;transform:scaleX(0.9725);">826</div>
<div class="t" style="left:761.40px;top:487.82px;font-size:13.5px;font-weight:400;color:#252423;transform:scaleX(0.9725);">428</div>
<div class="t" style="left:484.60px;top:507.82px;font-size:13.5px;font-weight:400;color:#252423;transform:scaleX(0.9725);">Jenelia</div>
<div class="t" style="left:689.30px;top:507.82px;font-size:13.5px;font-weight:400;color:#252423;transform:scaleX(0.9725);">796</div>
<div class="t" style="left:761.40px;top:507.82px;font-size:13.5px;font-weight:400;color:#252423;transform:scaleX(0.9725);">398</div>
<div class="t" style="left:483.63px;top:527.82px;font-size:13.5px;font-weight:400;color:#252423;transform:scaleX(0.9725);">Kareena</div>
<div class="t" style="left:689.30px;top:527.82px;font-size:13.5px;font-weight:400;color:#252423;transform:scaleX(0.9725);">826</div>
<div class="t" style="left:761.40px;top:527.82px;font-size:13.5px;font-weight:400;color:#252423;transform:scaleX(0.9725);">428</div>
<div class="t" style="left:483.63px;top:547.82px;font-size:13.5px;font-weight:400;color:#252423;transform:scaleX(0.9725);">Kiara</div>
<div class="t" style="left:689.30px;top:547.82px;font-size:13.5px;font-weight:400;color:#252423;transform:scaleX(0.9725);">685</div>
<div class="t" style="left:761.40px;top:547.82px;font-size:13.5px;font-weight:400;color:#252423;transform:scaleX(0.9725);">298</div>
<div class="t" style="left:483.63px;top:567.82px;font-size:13.5px;font-weight:400;color:#252423;transform:scaleX(0.9725);">Salman</div>
<div class="t" style="left:688.33px;top:567.82px;font-size:13.5px;font-weight:400;color:#252423;transform:scaleX(0.9725);">834</div>
<div class="t" style="left:761.40px;top:567.82px;font-size:13.5px;font-weight:400;color:#252423;transform:scaleX(0.9725);">489</div>
<div class="t" style="left:483.63px;top:587.82px;font-size:13.5px;font-weight:400;color:#252423;transform:scaleX(0.9725);">Sumit</div>
<div class="t" style="left:688.33px;top:587.82px;font-size:13.5px;font-weight:400;color:#252423;transform:scaleX(0.9725);">634</div>
<div class="t" style="left:761.40px;top:587.82px;font-size:13.5px;font-weight:400;color:#252423;transform:scaleX(0.9725);">345</div>
<div class="t" style="left:1091.56px;top:366.82px;font-size:15.5px;font-weight:400;color:#252423;transform:scaleX(0.9434);">Country</div>
<svg style="left:0;top:0" width="1920" height="1028" viewBox="0 0 1920 1028"><path d="M1355 371l5.5 5.5l5.5-5.5" fill="none" stroke="#605e5c" stroke-width="1"/></svg>
<div class="a" style="left:1092px;top:392px;width:16px;height:16px;border:1px solid #605e5c;background:#fff"></div>
<div class="t" style="left:1116.80px;top:393.75px;font-size:15px;font-weight:400;color:#252423;transform:scaleX(1.0182);">America</div>
<div class="a" style="left:1092px;top:421px;width:16px;height:16px;border:1px solid #605e5c;background:#fff"></div>
<div class="t" style="left:1116.80px;top:422.65px;font-size:15px;font-weight:400;color:#252423;transform:scaleX(1.0182);">Australia</div>
<div class="a" style="left:1092px;top:450px;width:16px;height:16px;border:1px solid #605e5c;background:#fff"></div>
<div class="t" style="left:1115.78px;top:451.55px;font-size:15px;font-weight:400;color:#252423;transform:scaleX(1.0182);">Brazil</div>
<div class="a" style="left:1092px;top:479px;width:16px;height:16px;border:1px solid #605e5c;background:#fff"></div>
<div class="t" style="left:1116.80px;top:480.45px;font-size:15px;font-weight:400;color:#252423;transform:scaleX(1.0182);">Canada</div>
<div class="a" style="left:1092px;top:508px;width:16px;height:16px;border:1px solid #605e5c;background:#252423"></div>
<div class="t" style="left:1115.78px;top:509.35px;font-size:15px;font-weight:400;color:#252423;transform:scaleX(1.0182);">India</div>
<div class="a" style="left:1092px;top:537px;width:16px;height:16px;border:1px solid #605e5c;background:#fff"></div>
<div class="t" style="left:1115.78px;top:538.25px;font-size:15px;font-weight:400;color:#252423;transform:scaleX(1.0182);">New Zealand</div>
<div class="a" style="left:1092px;top:566px;width:16px;height:16px;border:1px solid #605e5c;background:#fff"></div>
<div class="t" style="left:1115.78px;top:567.15px;font-size:15px;font-weight:400;color:#252423;transform:scaleX(1.0182);">Switzerland</div>
<div class="t" style="left:1011.00px;top:667.12px;font-size:15.5px;font-weight:400;color:#252423;transform:scaleX(0.8947);">Value</div>
<div class="a" style="left:1011px;top:693px;width:16px;height:16px;border:1px solid #605e5c;background:#fff"></div>
<div class="t" style="left:1034.98px;top:694.75px;font-size:15px;font-weight:400;color:#252423;transform:scaleX(1.0182);">10th</div>
<div class="a" style="left:1011px;top:722px;width:16px;height:16px;border:1px solid #605e5c;background:#fff"></div>
<div class="t" style="left:1034.98px;top:723.25px;font-size:15px;font-weight:400;color:#252423;transform:scaleX(1.0182);">12th</div>
<div class="a" style="left:51px;top:956px;width:159px;height:43px;background:#f3f2f1"></div>
<div class="a" style="left:210px;top:956px;width:1209px;height:43px;background:#fff"></div>
<div class="a" style="left:210px;top:956px;width:1px;height:43px;background:#c8c6c4"></div>
<div class="a" style="left:250px;top:956px;width:1px;height:43px;background:#c8c6c4"></div>
<div class="a" style="left:360px;top:956px;width:1px;height:43px;background:#c8c6c4"></div>
<div class="a" style="left:522px;top:956px;width:1px;height:43px;background:#c8c6c4"></div>
<div class="a" style="left:703px;top:956px;width:1px;height:43px;background:#c8c6c4"></div>
<div class="a" style="left:843px;top:956px;width:1px;height:43px;background:#c8c6c4"></div>
<div class="a" style="left:946px;top:956px;width:1px;height:43px;background:#c8c6c4"></div>
<div class="a" style="left:1050px;top:956px;width:1px;height:43px;background:#c8c6c4"></div>
<div class="a" style="left:1153px;top:956px;width:1px;height:43px;background:#c8c6c4"></div>
<div class="a" style="left:1257px;top:956px;width:1px;height:43px;background:#c8c6c4"></div>
<div class="a" style="left:361px;top:995px;width:161px;height:5px;background:#117865"></div>
<div class="a" style="left:1419px;top:956px;width:49px;height:44px;background:#117865"></div>
<svg style="left:0;top:0" width="1920" height="1028" viewBox="0 0 1920 1028"><path d="M1443 970v14M1436 977h14" stroke="#fff" stroke-width="3"/></svg>
<div class="t" style="left:208.87px;top:971.40px;font-size:16px;font-weight:400;color:#252423;transform:scaleX(0.9294);">16</div>
<div class="t" style="left:276.09px;top:971.40px;font-size:16px;font-weight:400;color:#252423;transform:scaleX(0.8113);">RELATED</div>
<div class="t" style="left:547.35px;top:971.40px;font-size:16px;font-weight:400;color:#252423;transform:scaleX(0.9522);">Rounding functions</div>
<div class="t" style="left:728.40px;top:971.40px;font-size:16px;font-weight:400;color:#252423;transform:scaleX(0.7912);">ALLSELECTED</div>
<div class="t" style="left:867.69px;top:971.40px;font-size:16px;font-weight:400;color:#252423;transform:scaleX(0.9103);">Page 17</div>
<div class="t" style="left:971.09px;top:971.40px;font-size:16px;font-weight:400;color:#252423;transform:scaleX(0.9138);">Page 18</div>
<div class="t" style="left:1075.09px;top:971.40px;font-size:16px;font-weight:400;color:#252423;transform:scaleX(0.9138);">Page 19</div>
<div class="t" style="left:1179.10px;top:971.40px;font-size:16px;font-weight:400;color:#252423;transform:scaleX(0.8966);">Page 20</div>
<div class="t" style="left:1282.06px;top:971.40px;font-size:16px;font-weight:400;color:#252423;transform:scaleX(0.9448);">Power Automate</div>
<div class="t" style="left:385.37px;top:971.40px;font-size:16px;font-weight:400;-webkit-text-stroke:0.45px #252423;color:#252423;transform:scaleX(0.8284);">SELECTEDVALUE</div>
<svg style="left:0;top:0" width="1920" height="1028" viewBox="0 0 1920 1028">
<g fill="none" stroke="#3b3a39" stroke-width="1.3">
<rect x="66.5" y="965.5" width="22.5" height="15" rx="0.5"/>
<path d="M77.8 981v3.5M74 984.5h7.5"/>
<rect x="126.5" y="962.5" width="14.5" height="24" rx="1.5"/>
</g>
<path d="M132.5 983.5h2.5" stroke="#3b3a39" stroke-width="1.2"/>
<rect x="64" y="990.8" width="30" height="2.6" rx="1.3" fill="#117865"/>
<path d="M174 972v10l-6-5z" fill="#252423"/>
<path d="M196.5 972v10l6-5z" fill="#c8c6c4"/>
</svg>
<div class="t" style="left:4.09px;top:1008.88px;font-size:14.5px;font-weight:400;color:#323130;transform:scaleX(1.0101);">Page 47 of 54</div>
<svg style="left:0;top:0" width="1920" height="1028" viewBox="0 0 1920 1028">
<path d="M1656 1015.5h5" stroke="#605e5c" stroke-width="1.5"/>
<path d="M1667 1015.5h125" stroke="#605e5c" stroke-width="1"/>
<path d="M1729.6 1011.5v8" stroke="#605e5c" stroke-width="1"/>
<rect x="1712.8" y="1009" width="5.2" height="12.8" fill="#605e5c"/>
<path d="M1799 1015.5h9M1803.5 1011v9" stroke="#3b3a39" stroke-width="1.5"/>
<g fill="none" stroke="#3b3a39" stroke-width="1.3"><path d="M1878 1012v-3.5h4M1893 1008.5h4v3.5M1897 1018.5v3.5h-4M1882 1022h-4v-3.5"/></g>
<rect x="1877.6" y="1008" width="19.5" height="14.7" fill="none" stroke="#8a8886" stroke-width="1"/>
</svg>
<div class="t" style="left:1825.40px;top:1007.05px;font-size:15px;font-weight:400;color:#323130;transform:scaleX(0.9200);">80%</div>
<svg style="left:0;top:0" width="1920" height="1028" viewBox="0 0 1920 1028">
<g fill="none" stroke="#252423" stroke-width="1.2">
<path d="M1448.5 216.5l-7 7l7 7M1455.5 216.5l-7 7l7 7"/>
<path d="M1458 252v14.5l-7-5.5h-5.5v-3.5h5.5z" stroke-linejoin="round"/>
</g>
</svg>
<div class="t" style="left:1459.20px;top:277.12px;font-size:20px;font-weight:400;-webkit-text-stroke:0.5px #252423;color:#252423;transform:rotate(90deg) scaleX(0.9774)">Filters</div>
<div class="t" style="left:1479.60px;top:214.57px;font-size:20.5px;font-weight:400;-webkit-text-stroke:0.45px #252423;color:#252423;transform:scaleX(0.9792);">Visualizations</div>
<svg style="left:0;top:0" width="1920" height="1028" viewBox="0 0 1920 1028"><path d="M1669 217.5l7 7l-7 7M1676 217.5l7 7l-7 7" fill="none" stroke="#252423" stroke-width="1.2"/></svg>
<div class="t" style="left:1478.56px;top:250.02px;font-size:14.8px;font-weight:400;-webkit-text-stroke:0.45px #252423;color:#252423;transform:scaleX(1.0438);">Build visual</div>
<div class="a" style="left:1479px;top:272px;width:40px;height:40px;background:#d6d4d2;border-radius:3px"></div>
<svg style="left:0;top:0" width="1920" height="1028" viewBox="0 0 1920 1028">
<path d="M1484 277.5h24" stroke="#252423" stroke-width="1.2"/>
<rect x="1484.5" y="283.5" width="29" height="9.5" fill="#117865" stroke="#252423" stroke-width="1" stroke-dasharray="1.5 1"/>
<rect x="1484.5" y="297" width="29" height="9.5" fill="#117865" stroke="#252423" stroke-width="1" stroke-dasharray="1.5 1"/>
<g fill="none" stroke="#252423" stroke-width="1.3">
<path d="M1579.5 306.5h-12v-29h12l5 5v6"/>
<path d="M1579 277.5v5.5h5.5"/>
<path d="M1597 288.5L1583.5 302.5"/>
<path d="M1576 306.5c2.5 0 5.5-0.5 7.5-2.5c1.5-1.5 1.5-3 0.5-4c-1-1-2.5-1-4 0.5c-1.5 1.5-1.5 4-4 6z"/>
</g>
<path d="M1468 327.5h21.5l9-9l9 9h57" fill="none" stroke="#8a8886" stroke-width="1"/>
</svg>
<svg style="left:0;top:0" width="1920" height="1028" viewBox="0 0 1920 1028"><g transform="translate(1483,342)"><path d="M0.8 0v22.2h22.2" fill="none" stroke="#3b3a39" stroke-width="1.5"/><rect x="1.5" y="3" width="6" height="5.5" fill="#fff" stroke="#3b3a39" stroke-width="1"/><rect x="7.5" y="3" width="7.5" height="5.5" fill="#8cc4f0" stroke="#1a6dc4" stroke-width="1.1"/><rect x="1.5" y="12.3" width="8" height="5.5" fill="#fff" stroke="#3b3a39" stroke-width="1"/><rect x="9.5" y="12.3" width="10.5" height="5.5" fill="#c8c6c4" stroke="#8a8886" stroke-width="1.1"/></g><g transform="translate(1518,342)"><path d="M0.8 0v22.2h22.2" fill="none" stroke="#3b3a39" stroke-width="1.5"/><rect x="4.5" y="14.5" width="5.5" height="7.5" fill="#fff" stroke="#3b3a39" stroke-width="1"/><rect x="4.5" y="6.5" width="5.5" height="8" fill="#8cc4f0" stroke="#1a6dc4" stroke-width="1.1"/><rect x="14.2" y="14" width="5.5" height="8" fill="#fff" stroke="#3b3a39" stroke-width="1"/><rect x="14.2" y="2.5" width="5.5" height="11.5" fill="#c8c6c4" stroke="#8a8886" stroke-width="1.1"/></g><g transform="translate(1553,342)"><path d="M0.8 0v22.5" stroke="#3b3a39" stroke-width="1.5"/><rect x="1.5" y="1.5" width="21" height="5" fill="#8cc4f0" stroke="#1a6dc4" stroke-width="1"/><rect x="1.5" y="9.5" width="21" height="5" fill="#c8c6c4" stroke="#605e5c" stroke-width="1"/><rect x="1.5" y="17" width="21" height="4.5" fill="#fff" stroke="#3b3a39" stroke-width="1"/></g><g transform="translate(1483,377)"><path d="M0.8 0v22.2h22.2" fill="none" stroke="#3b3a39" stroke-width="1.5"/><path d="M1.5 12L6.5 7.5L10.5 11.5L16 5.5L20 9" fill="none" stroke="#3b3a39" stroke-width="1.3"/><path d="M1.5 17.5L13.5 5L20 12" fill="none" stroke="#1a6dc4" stroke-width="1.3"/></g><g transform="translate(1518,377)"><path d="M16.5 0L22 9.5V22H12z" fill="#c8c6c4" stroke="#8a8886" stroke-width="1"/><path d="M0.5 14L7 2L13.5 10L11 22H0.5z" fill="#fafafa" stroke="#3b3a39" stroke-width="1.2"/><path d="M0.5 14L6 19L13 10L22 22H0.5z" fill="#8cc4f0" stroke="#1a6dc4" stroke-width="1.2"/></g><g transform="translate(1553,377)"><path d="M0.8 0v22.2h22.2" fill="none" stroke="#3b3a39" stroke-width="1.5"/><path d="M1.5 5.5L8 10.5L14 5.5V14L8 19L1.5 13z" fill="#8cc4f0" stroke="#1a6dc4" stroke-width="1.2"/></g><g transform="translate(1483,412)"><path d="M0.8 0v22.2h22.2" fill="none" stroke="#3b3a39" stroke-width="1.5"/><path d="M3 4C7 8 11 8 15 4L21.5 2.5V8L15 9.5C11 13 7 13 3 9z" fill="#a19f9d" stroke="#605e5c" stroke-width="1"/><rect x="3" y="13.5" width="18.5" height="5" fill="#f7a823" stroke="#d9680f" stroke-width="0.8"/><path d="M3 10C6 10 8 17 12 17C16 17 17 10 21.5 10" fill="none" stroke="#1a6dc4" stroke-width="2.6"/><path d="M3 10C6 10 8 17 12 17C16 17 17 10 21.5 10" fill="none" stroke="#8cc4f0" stroke-width="1"/></g><g transform="translate(1518,412)"><path d="M0.8 0v22.2h22.2" fill="none" stroke="#3b3a39" stroke-width="1.5"/><rect x="3.5" y="6.5" width="4" height="15.5" fill="#fff" stroke="#3b3a39" stroke-width="1"/><rect x="7.5" y="6.5" width="4" height="8" fill="#8a8886"/><rect x="11.5" y="1.5" width="3" height="12" fill="#1a6dc4"/><rect x="15" y="1.5" width="6" height="20.5" fill="#fff" stroke="#3b3a39" stroke-width="1"/></g><g transform="translate(1553,412)"><rect x="0.5" y="0.5" width="22" height="6" fill="#8cc4f0" stroke="#1a6dc4" stroke-width="1.1"/><rect x="3.5" y="6.5" width="17" height="6.5" fill="#8cc4f0" stroke="#1a6dc4" stroke-width="1.1"/><rect x="6.5" y="13" width="10" height="6.5" fill="#8cc4f0" stroke="#1a6dc4" stroke-width="1.1"/></g><g transform="translate(1483,447)"><rect x="0.5" y="0.5" width="22" height="22" fill="#fff" stroke="#3b3a39" stroke-width="1.3"/><rect x="0.8" y="0.8" width="10.5" height="10.5" fill="#8cc4f0" stroke="#1a6dc4" stroke-width="1.1"/><rect x="0.8" y="11.3" width="10.5" height="11" fill="#8cc4f0" stroke="#1a6dc4" stroke-width="1.1"/><path d="M11.3 7h11M16.5 7v15.5M11.3 14.5h5.2" stroke="#3b3a39" stroke-width="1.1" fill="none"/></g><g transform="translate(1518,447)"><circle cx="11.5" cy="9.5" r="8" fill="#2d8a47" stroke="#3b3a39" stroke-width="1.3"/><path d="M6 6c2-2 5-1 5 1c0 2 3 2 2 5c-1 2-3 0-4 2c-2-1-4-2-3-8zM14 11c2 1 4 1 4 3c-1 2-3 2-4 0z" fill="#fff"/><path d="M3.5 9.5a8 8 0 0 0 16 0M11.5 18v3.5M6 22.3h11" fill="none" stroke="#3b3a39" stroke-width="1.3"/></g><g transform="translate(1553,447)"><path d="M2 2l6-1l8 1v9l-14 0z" fill="#8cc4f0" stroke="#1a6dc4" stroke-width="1"/><path d="M2 11h14v7l-5 4l-8-4z" fill="#c8c6c4" stroke="#605e5c" stroke-width="1"/></g><g transform="translate(1483,482)"><rect x="0.7" y="0.7" width="22" height="22" fill="#fff" stroke="#3b3a39" stroke-width="1.4"/><path d="M4.5 4v15" stroke="#8a8886" stroke-width="1"/><path d="M6.5 6.5h12M6.5 14h12" stroke="#1a6dc4" stroke-width="1.6"/><path d="M6.5 10h6M6.5 17.5h6" stroke="#8a8886" stroke-width="1.1"/></g><g transform="translate(1518,482)"><rect x="0.7" y="1.7" width="22" height="19" fill="#fff" stroke="#3b3a39" stroke-width="1.4"/><path d="M3 13L6.5 7L10 13z" fill="#58b26a" stroke="#2d8a47" stroke-width="0.8"/><path d="M12 7h8L16 13z" fill="#f0616d" stroke="#d3222f" stroke-width="0.8"/><path d="M3 16.5h17" stroke="#8a8886" stroke-width="1"/></g><g transform="translate(1553,482)"><rect x="0.7" y="0.7" width="22" height="22" fill="#fff" stroke="#3b3a39" stroke-width="1.3"/><path d="M0.7 4.5h22" stroke="#8a8886"/><rect x="6" y="8" width="5" height="4" fill="#c8c6c4" stroke="#8a8886" stroke-width="0.8"/><rect x="6" y="14.5" width="5" height="4" fill="#c8c6c4" stroke="#8a8886" stroke-width="0.8"/></g><g transform="translate(1518,517)"><path d="M0.8 0v22.2h22.2" fill="none" stroke="#3b3a39" stroke-width="1.3"/><path d="M1.5 4.5h16M1.5 10h12M1.5 16h7" stroke="#605e5c" stroke-width="1.1"/><path d="M1.5 4.5h16" stroke="#1a6dc4" stroke-width="1.2"/><circle cx="19" cy="4.5" r="3" fill="#8cc4f0" stroke="#1a6dc4" stroke-width="1.1"/><rect x="13" y="8.3" width="3.5" height="3.5" fill="#fff" stroke="#605e5c" stroke-width="0.9"/><rect x="8" y="14.3" width="3.5" height="3.5" fill="#fff" stroke="#605e5c" stroke-width="0.9"/></g><g transform="translate(1553,517)"><rect x="1" y="8" width="8" height="5.5" fill="#8cc4f0" stroke="#1a6dc4" stroke-width="1.1"/><path d="M9 10.5h6" stroke="#605e5c" stroke-width="1"/></g><g transform="translate(1483,552)"><path d="M2 1h12l6 6v15.5H2z" fill="#fff" stroke="#3b3a39" stroke-width="1.4"/><path d="M14 1v6h6" fill="none" stroke="#3b3a39" stroke-width="1.1"/><rect x="5" y="14" width="3" height="5" fill="#3b3a39"/><rect x="9.5" y="16" width="3" height="3" fill="#3b3a39"/><rect x="14" y="11" width="3" height="8" fill="#3b3a39"/></g><g transform="translate(1518,552)"><rect x="1" y="6.5" width="22" height="15.5" fill="#fff" stroke="#3b3a39" stroke-width="1.3"/><path d="M4 19.5h16" stroke="#8a8886"/><text x="7" y="17" font-size="11" font-family="Liberation Sans" fill="#3a96dd">123</text><path d="M4.5 0h6l-3 5h3l-8 9l2.5-6.5h-3z" fill="#f7a823" stroke="#d9680f" stroke-width="0.8" stroke-linejoin="round"/></g><g transform="translate(1553,552)"><rect x="1" y="4" width="21" height="18.5" fill="#fff" stroke="#3b3a39" stroke-width="1.3"/><rect x="6" y="10" width="4.5" height="4" fill="#c8c6c4" stroke="#8a8886" stroke-width="0.8"/><rect x="6" y="16" width="4.5" height="4" fill="#c8c6c4" stroke="#8a8886" stroke-width="0.8"/><path d="M4.5 0h6l-3 5h3l-8 9l2.5-6.5h-3z" fill="#f7a823" stroke="#d9680f" stroke-width="0.8" stroke-linejoin="round"/></g><g fill="#252423"><rect x="1484.5" y="594.5" width="2.2" height="2.2"/><rect x="1492.8" y="594.5" width="2.2" height="2.2"/><rect x="1501" y="594.5" width="2.2" height="2.2"/></g></svg>
<div class="t" style="left:1481.5px;top:516px;font-size:25px;font-weight:700;color:#1a7ac8;transform:scaleX(0.92);transform-origin:0 0">Py</div>
<div class="a" style="left:1468px;top:621px;width:97px;height:1px;background:#e1dfdd"></div>
<div class="t" style="left:1484.40px;top:635.25px;font-size:15px;font-weight:400;color:#252423;transform:scaleX(0.9156);">Values</div>
<div class="a" style="left:1474px;top:659px;width:120px;height:35px;background:#fff;border:1px dashed #c8c6c4;border-right:none"></div>
<div class="t" style="left:1488.20px;top:669.25px;font-size:15px;font-weight:400;color:#252423;transform:scaleX(1.0182);">Add data fields here</div>
<div class="t" style="left:1483.38px;top:710.65px;font-size:15px;font-weight:400;-webkit-text-stroke:0.45px #252423;color:#252423;transform:scaleX(1.0182);">Drill through</div>
<div class="t" style="left:1484.40px;top:741.25px;font-size:15px;font-weight:400;color:#252423;transform:scaleX(1.0182);">Cross-report</div>
<div class="t" style="left:1483.38px;top:775.25px;font-size:15px;font-weight:400;color:#252423;transform:scaleX(1.0182);">Keep all filters</div>
<div class="a" style="left:1474px;top:806px;width:120px;height:32px;background:#fff;border:1px dashed #c8c6c4;border-right:none"></div>
<div class="t" style="left:1486.40px;top:814.75px;font-size:15px;font-weight:400;color:#252423;transform:scaleX(1.0182);">Add drill-through fields here</div>
<div class="t" style="left:1705.05px;top:214.57px;font-size:20.5px;font-weight:400;-webkit-text-stroke:0.45px #252423;color:#252423;transform:scaleX(0.9535);">Data</div>
<svg style="left:0;top:0" width="1920" height="1028" viewBox="0 0 1920 1028"><path d="M1895.5 217.5l7 7l-7 7M1902.5 217.5l7 7l-7 7" fill="none" stroke="#252423" stroke-width="1.2"/></svg>
<div class="a" style="left:1701px;top:258px;width:213px;height:29px;background:#fff;border:1px solid #d2d0ce;border-bottom:1px solid #605e5c;border-radius:4px"></div>
<svg style="left:0;top:0" width="1920" height="1028" viewBox="0 0 1920 1028"><circle cx="1723.5" cy="271" r="6" fill="none" stroke="#3b3a39" stroke-width="1.3"/><path d="M1727.8 275.3l5 5" stroke="#3b3a39" stroke-width="1.4"/></svg>
<div class="t" style="left:1740.95px;top:265.60px;font-size:16px;font-weight:400;color:#605e5c;transform:scaleX(1.0531);">Search</div>
<div class="a" style="left:1905px;top:297px;width:10px;height:306px;background:#c8c6c4"></div>
<div class="t" style="left:1754.30px;top:306.25px;font-size:15px;font-weight:400;color:#323130;transform:scaleX(0.9592);">Ashishdata</div>
<div class="t" style="left:1782.80px;top:366.25px;font-size:15px;font-weight:400;color:#323130;transform:scaleX(0.9592);">ntrylist</div>
<div class="t" style="left:1786.54px;top:396.25px;font-size:15px;font-weight:400;color:#323130;transform:scaleX(0.9592);">irst Parameter</div>
<div class="t" style="left:1779.37px;top:426.25px;font-size:15px;font-weight:400;color:#323130;transform:scaleX(0.9592);">dium Parameter</div>
<div class="t" style="left:1778.60px;top:456.25px;font-size:15px;font-weight:400;color:#323130;transform:scaleX(0.9592);">Second Parameter</div>
<div class="t" style="left:1774.67px;top:486.25px;font-size:15px;font-weight:400;color:#323130;transform:scaleX(0.9592);">eDrive Folder</div>
<div class="t" style="left:1772.58px;top:516.25px;font-size:15px;font-weight:400;color:#323130;transform:scaleX(0.9592);">ery1</div>
<div class="t" style="left:1774.08px;top:546.25px;font-size:15px;font-weight:400;color:#323130;transform:scaleX(0.9592);">ery1 (2)</div>
<div class="t" style="left:1773.51px;top:576.25px;font-size:15px;font-weight:400;color:#323130;transform:scaleX(0.9592);">ery10</div>
<div class="t" style="left:1774.47px;top:606.25px;font-size:15px;font-weight:400;color:#323130;transform:scaleX(0.9592);">ery11</div>
<div class="t" style="left:1773.51px;top:636.25px;font-size:15px;font-weight:400;color:#323130;transform:scaleX(0.9592);">ery12</div>
<div class="t" style="left:1773.51px;top:666.25px;font-size:15px;font-weight:400;color:#323130;transform:scaleX(0.9592);">ery13</div>
<div class="t" style="left:1772.55px;top:696.25px;font-size:15px;font-weight:400;color:#323130;transform:scaleX(0.9592);">ery14</div>
<div class="t" style="left:1773.51px;top:726.25px;font-size:15px;font-weight:400;color:#323130;transform:scaleX(0.9592);">ery15</div>
<div class="t" style="left:1773.51px;top:756.25px;font-size:15px;font-weight:400;color:#323130;transform:scaleX(0.9592);">ery16</div>
<div class="t" style="left:1773.51px;top:786.25px;font-size:15px;font-weight:400;color:#323130;transform:scaleX(0.9592);">ery17</div>
<div class="t" style="left:1773.18px;top:816.25px;font-size:15px;font-weight:400;color:#323130;transform:scaleX(0.9592);">ery2</div>
<div class="t" style="left:1754.30px;top:846.25px;font-size:15px;font-weight:400;color:#323130;transform:scaleX(0.9592);">Query3</div>
<div class="t" style="left:1754.30px;top:876.25px;font-size:15px;font-weight:400;color:#323130;transform:scaleX(0.9634);">Query3 (2)</div>
<div class="t" style="left:1754.30px;top:906.25px;font-size:15px;font-weight:400;color:#323130;transform:scaleX(0.9592);">Query4</div>
<div class="t" style="left:1754.30px;top:936.25px;font-size:15px;font-weight:400;color:#323130;transform:scaleX(0.9592);">Query5</div>
<div class="t" style="left:1754.30px;top:966.25px;font-size:15px;font-weight:400;color:#323130;transform:scaleX(0.9592);">Query6</div>
<svg style="left:0;top:0" width="1920" height="1028" viewBox="0 0 1920 1028"><path d="M1714.5 306l7 7l-7 7" fill="none" stroke="#605e5c" stroke-width="1.1"/><rect x="1731.8" y="306" width="14" height="14" rx="3" fill="none" stroke="#3b3a39" stroke-width="1.4"/><path d="M1731.8 310.7h14M1731.8 315.3h14M1736.5 306v14M1741.1 306v14" stroke="#3b3a39" stroke-width="1.2"/><path d="M1714.5 336l7 7l-7 7" fill="none" stroke="#605e5c" stroke-width="1.1"/><rect x="1731.8" y="336" width="14" height="14" rx="3" fill="none" stroke="#3b3a39" stroke-width="1.4"/><path d="M1731.8 340.7h14M1731.8 345.3h14M1736.5 336v14M1741.1 336v14" stroke="#3b3a39" stroke-width="1.2"/><path d="M1714.5 366l7 7l-7 7" fill="none" stroke="#605e5c" stroke-width="1.1"/><rect x="1731.8" y="366" width="14" height="14" rx="3" fill="none" stroke="#3b3a39" stroke-width="1.4"/><path d="M1731.8 370.7h14M1731.8 375.3h14M1736.5 366v14M1741.1 366v14" stroke="#3b3a39" stroke-width="1.2"/><path d="M1714.5 396l7 7l-7 7" fill="none" stroke="#605e5c" stroke-width="1.1"/><rect x="1731.8" y="396" width="14" height="14" rx="3" fill="none" stroke="#3b3a39" stroke-width="1.4"/><path d="M1731.8 400.7h14M1731.8 405.3h14M1736.5 396v14M1741.1 396v14" stroke="#3b3a39" stroke-width="1.2"/><path d="M1714.5 426l7 7l-7 7" fill="none" stroke="#605e5c" stroke-width="1.1"/><rect x="1731.8" y="426" width="14" height="14" rx="3" fill="none" stroke="#3b3a39" stroke-width="1.4"/><path d="M1731.8 430.7h14M1731.8 435.3h14M1736.5 426v14M1741.1 426v14" stroke="#3b3a39" stroke-width="1.2"/><path d="M1714.5 456l7 7l-7 7" fill="none" stroke="#605e5c" stroke-width="1.1"/><rect x="1731.8" y="456" width="14" height="14" rx="3" fill="none" stroke="#3b3a39" stroke-width="1.4"/><path d="M1731.8 460.7h14M1731.8 465.3h14M1736.5 456v14M1741.1 456v14" stroke="#3b3a39" stroke-width="1.2"/><path d="M1714.5 486l7 7l-7 7" fill="none" stroke="#605e5c" stroke-width="1.1"/><rect x="1731.8" y="486" width="14" height="14" rx="3" fill="none" stroke="#3b3a39" stroke-width="1.4"/><path d="M1731.8 490.7h14M1731.8 495.3h14M1736.5 486v14M1741.1 486v14" stroke="#3b3a39" stroke-width="1.2"/><path d="M1714.5 516l7 7l-7 7" fill="none" stroke="#605e5c" stroke-width="1.1"/><rect x="1731.8" y="516" width="14" height="14" rx="3" fill="none" stroke="#3b3a39" stroke-width="1.4"/><path d="M1731.8 520.7h14M1731.8 525.3h14M1736.5 516v14M1741.1 516v14" stroke="#3b3a39" stroke-width="1.2"/><path d="M1714.5 546l7 7l-7 7" fill="none" stroke="#605e5c" stroke-width="1.1"/><rect x="1731.8" y="546" width="14" height="14" rx="3" fill="none" stroke="#3b3a39" stroke-width="1.4"/><path d="M1731.8 550.7h14M1731.8 555.3h14M1736.5 546v14M1741.1 546v14" stroke="#3b3a39" stroke-width="1.2"/><path d="M1714.5 576l7 7l-7 7" fill="none" stroke="#605e5c" stroke-width="1.1"/><rect x="1731.8" y="576" width="14" height="14" rx="3" fill="none" stroke="#3b3a39" stroke-width="1.4"/><path d="M1731.8 580.7h14M1731.8 585.3h14M1736.5 576v14M1741.1 576v14" stroke="#3b3a39" stroke-width="1.2"/><path d="M1714.5 606l7 7l-7 7" fill="none" stroke="#605e5c" stroke-width="1.1"/><rect x="1731.8" y="606" width="14" height="14" rx="3" fill="none" stroke="#3b3a39" stroke-width="1.4"/><path d="M1731.8 610.7h14M1731.8 615.3h14M1736.5 606v14M1741.1 606v14" stroke="#3b3a39" stroke-width="1.2"/><path d="M1714.5 636l7 7l-7 7" fill="none" stroke="#605e5c" stroke-width="1.1"/><rect x="1731.8" y="636" width="14" height="14" rx="3" fill="none" stroke="#3b3a39" stroke-width="1.4"/><path d="M1731.8 640.7h14M1731.8 645.3h14M1736.5 636v14M1741.1 636v14" stroke="#3b3a39" stroke-width="1.2"/><path d="M1714.5 666l7 7l-7 7" fill="none" stroke="#605e5c" stroke-width="1.1"/><rect x="1731.8" y="666" width="14" height="14" rx="3" fill="none" stroke="#3b3a39" stroke-width="1.4"/><path d="M1731.8 670.7h14M1731.8 675.3h14M1736.5 666v14M1741.1 666v14" stroke="#3b3a39" stroke-width="1.2"/><path d="M1714.5 696l7 7l-7 7" fill="none" stroke="#605e5c" stroke-width="1.1"/><rect x="1731.8" y="696" width="14" height="14" rx="3" fill="none" stroke="#3b3a39" stroke-width="1.4"/><path d="M1731.8 700.7h14M1731.8 705.3h14M1736.5 696v14M1741.1 696v14" stroke="#3b3a39" stroke-width="1.2"/><path d="M1714.5 726l7 7l-7 7" fill="none" stroke="#605e5c" stroke-width="1.1"/><rect x="1731.8" y="726" width="14" height="14" rx="3" fill="none" stroke="#3b3a39" stroke-width="1.4"/><path d="M1731.8 730.7h14M1731.8 735.3h14M1736.5 726v14M1741.1 726v14" stroke="#3b3a39" stroke-width="1.2"/><path d="M1714.5 756l7 7l-7 7" fill="none" stroke="#605e5c" stroke-width="1.1"/><rect x="1731.8" y="756" width="14" height="14" rx="3" fill="none" stroke="#3b3a39" stroke-width="1.4"/><path d="M1731.8 760.7h14M1731.8 765.3h14M1736.5 756v14M1741.1 756v14" stroke="#3b3a39" stroke-width="1.2"/><path d="M1714.5 786l7 7l-7 7" fill="none" stroke="#605e5c" stroke-width="1.1"/><rect x="1731.8" y="786" width="14" height="14" rx="3" fill="none" stroke="#3b3a39" stroke-width="1.4"/><path d="M1731.8 790.7h14M1731.8 795.3h14M1736.5 786v14M1741.1 786v14" stroke="#3b3a39" stroke-width="1.2"/><path d="M1714.5 816l7 7l-7 7" fill="none" stroke="#605e5c" stroke-width="1.1"/><rect x="1731.8" y="816" width="14" height="14" rx="3" fill="none" stroke="#3b3a39" stroke-width="1.4"/><path d="M1731.8 820.7h14M1731.8 825.3h14M1736.5 816v14M1741.1 816v14" stroke="#3b3a39" stroke-width="1.2"/><path d="M1714.5 846l7 7l-7 7" fill="none" stroke="#605e5c" stroke-width="1.1"/><rect x="1731.8" y="846" width="14" height="14" rx="3" fill="none" stroke="#3b3a39" stroke-width="1.4"/><path d="M1731.8 850.7h14M1731.8 855.3h14M1736.5 846v14M1741.1 846v14" stroke="#3b3a39" stroke-width="1.2"/><path d="M1714.5 876l7 7l-7 7" fill="none" stroke="#605e5c" stroke-width="1.1"/><rect x="1731.8" y="876" width="14" height="14" rx="3" fill="none" stroke="#3b3a39" stroke-width="1.4"/><path d="M1731.8 880.7h14M1731.8 885.3h14M1736.5 876v14M1741.1 876v14" stroke="#3b3a39" stroke-width="1.2"/><path d="M1714.5 906l7 7l-7 7" fill="none" stroke="#605e5c" stroke-width="1.1"/><rect x="1731.8" y="906" width="14" height="14" rx="3" fill="none" stroke="#3b3a39" stroke-width="1.4"/><path d="M1731.8 910.7h14M1731.8 915.3h14M1736.5 906v14M1741.1 906v14" stroke="#3b3a39" stroke-width="1.2"/><path d="M1714.5 936l7 7l-7 7" fill="none" stroke="#605e5c" stroke-width="1.1"/><rect x="1731.8" y="936" width="14" height="14" rx="3" fill="none" stroke="#3b3a39" stroke-width="1.4"/><path d="M1731.8 940.7h14M1731.8 945.3h14M1736.5 936v14M1741.1 936v14" stroke="#3b3a39" stroke-width="1.2"/><path d="M1714.5 966l7 7l-7 7" fill="none" stroke="#605e5c" stroke-width="1.1"/><rect x="1731.8" y="966" width="14" height="14" rx="3" fill="none" stroke="#3b3a39" stroke-width="1.4"/><path d="M1731.8 970.7h14M1731.8 975.3h14M1736.5 966v14M1741.1 966v14" stroke="#3b3a39" stroke-width="1.2"/></svg>
<div class="a" style="left:1565px;top:324px;width:225px;height:520px;background:#fff;box-shadow:0 3px 8px rgba(0,0,0,0.22),0 0 2px rgba(0,0,0,0.12);border-radius:2px"></div>
<div class="a" style="left:1565px;top:628px;width:225px;height:31px;background:#f3f2f1"></div>
<div class="a" style="left:1565px;top:355px;width:225px;height:2px;background:#edebe9"></div>
<div class="a" style="left:1565px;top:446px;width:225px;height:2px;background:#edebe9"></div>
<div class="a" style="left:1565px;top:597px;width:225px;height:2px;background:#edebe9"></div>
<div class="a" style="left:1565px;top:688px;width:225px;height:2px;background:#edebe9"></div>
<div class="a" style="left:1565px;top:720px;width:225px;height:2px;background:#edebe9"></div>
<div class="a" style="left:1565px;top:781px;width:225px;height:2px;background:#edebe9"></div>
<div class="t" style="left:1575.02px;top:333.25px;font-size:15px;font-weight:400;color:#323130;transform:scaleX(0.9846);">Select</div>
<div class="t" style="left:1575.02px;top:365.05px;font-size:15px;font-weight:400;color:#323130;transform:scaleX(0.9846);">New measure</div>
<div class="t" style="left:1575.02px;top:394.85px;font-size:15px;font-weight:400;color:#323130;transform:scaleX(0.9846);">New column</div>
<div class="t" style="left:1575.02px;top:424.85px;font-size:15px;font-weight:400;color:#323130;transform:scaleX(0.9846);">New quick measure</div>
<div class="t" style="left:1575.02px;top:456.15px;font-size:15px;font-weight:400;color:#323130;transform:scaleX(0.9846);">Refresh data</div>
<div class="t" style="left:1575.02px;top:486.15px;font-size:15px;font-weight:400;color:#323130;transform:scaleX(0.9846);">Edit query</div>
<div class="t" style="left:1575.02px;top:516.05px;font-size:15px;font-weight:400;color:#323130;transform:scaleX(0.9846);">Manage relationships</div>
<div class="t" style="left:1575.02px;top:546.05px;font-size:15px;font-weight:400;color:#323130;transform:scaleX(0.9846);">Incremental refresh</div>
<div class="t" style="left:1575.02px;top:576.05px;font-size:15px;font-weight:400;color:#323130;transform:scaleX(0.9846);">Manage aggregations</div>
<div class="t" style="left:1575.02px;top:607.05px;font-size:15px;font-weight:400;color:#323130;transform:scaleX(0.9846);">Rename</div>
<div class="t" style="left:1575.02px;top:637.05px;font-size:15px;font-weight:400;color:#323130;transform:scaleX(0.9846);">Delete from model</div>
<div class="t" style="left:1575.02px;top:667.45px;font-size:15px;font-weight:400;color:#323130;transform:scaleX(0.9846);">Hide</div>
<div class="t" style="left:1575.02px;top:698.15px;font-size:15px;font-weight:400;color:#323130;transform:scaleX(0.9846);">Mark as date table</div>
<div class="t" style="left:1576.00px;top:730.25px;font-size:15px;font-weight:400;color:#323130;transform:scaleX(0.9846);">View hidden</div>
<div class="t" style="left:1576.00px;top:790.85px;font-size:15px;font-weight:400;color:#323130;transform:scaleX(0.9846);">Collapse all</div>
<div class="t" style="left:1575.02px;top:820.65px;font-size:15px;font-weight:400;color:#323130;transform:scaleX(0.9846);">Expand all</div>
<div class="t" style="left:1575.02px;top:759.75px;font-size:15px;font-weight:400;color:#a19f9d;transform:scaleX(0.9846);">Unhide all</div>
<svg style="left:0;top:0" width="1920" height="1028" viewBox="0 0 1920 1028"><path d="M1714.5 640C1714 648 1719 653 1727 650.5L1765 636" fill="none" stroke="#e3161a" stroke-width="3.8" stroke-linecap="round"/></svg>
</body></html>
